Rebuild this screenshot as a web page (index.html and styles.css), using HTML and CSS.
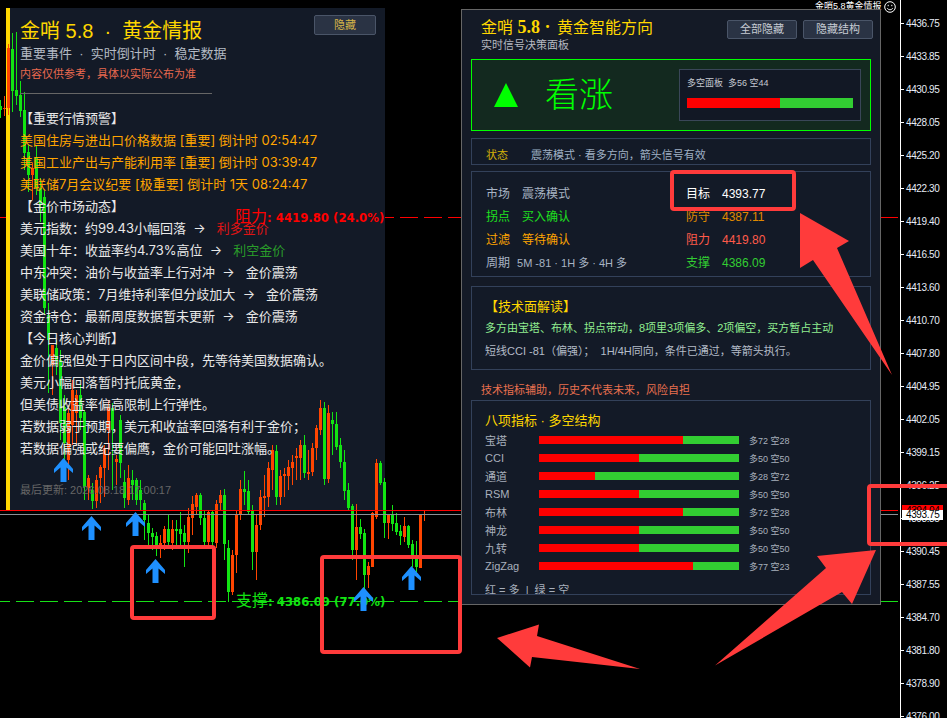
FILE: index.html
```html
<!DOCTYPE html>
<html lang="zh-CN">
<head>
    <meta charset="UTF-8">
    <meta name="viewport" content="width=device-width, initial-scale=1.0">
    <title>金哨 5.8 黄金情报</title>
    <link rel="stylesheet" href="styles.css">
</head>
<body>
    <div class="stage">
        <!-- Levels sit behind the info panel -->
        <svg class="layer" width="947" height="718">
            <line class="dash dash-red" x1="898" y1="217.5" x2="0" y2="217.5"></line>
            <line class="dash dash-green" x1="898" y1="601.5" x2="0" y2="601.5"></line>
        </svg>

        <div class="info-bg"></div>

        <svg class="layer" width="947" height="718" shape-rendering="crispEdges">
            <g id="candles"></g>
            <line class="price-line red" x1="0" y1="510.5" x2="898" y2="510.5"></line>
            <line class="price-line gray" x1="0" y1="514.5" x2="898" y2="514.5"></line>
        </svg>

        <!-- Left panel: events -->
        <div class="info-panel">
            <div class="info-head">
                <div class="info-title">金哨 5.8  ·  黄金情报</div>
                <button class="btn btn-gold">隐藏</button>
            </div>
            <div class="info-sub">重要事件  ·  实时倒计时  ·  稳定数据</div>
            <div class="info-warn">内容仅供参考，具体以实际公布为准</div>
            <div class="info-rule"></div>
            <div class="info-lines">
                <div>【重要行情预警】</div>
                <div class="orange">美国住房与进出口价格数据 [重要] 倒计时 02:54:47</div>
                <div class="orange">美国工业产出与产能利用率 [重要] 倒计时 03:39:47</div>
                <div class="orange">美联储7月会议纪要 [极重要] 倒计时 1天 08:24:47</div>
                <div>【金价市场动态】</div>
                <div>美元指数：约99.43小幅回落  →   <span class="bull">利多金价</span></div>
                <div>美国十年：收益率约4.73%高位  →   <span class="bear">利空金价</span></div>
                <div>中东冲突：油价与收益率上行对冲  →   金价震荡</div>
                <div>美联储政策：7月维持利率但分歧加大  →   金价震荡</div>
                <div>资金持仓：最新周度数据暂未更新  →   金价震荡</div>
                <div>【今日核心判断】</div>
                <div>金价偏强但处于日内区间中段，先等待美国数据确认。</div>
                <div>美元小幅回落暂时托底黄金，</div>
                <div>但美债收益率偏高限制上行弹性。</div>
                <div>若数据弱于预期，美元和收益率回落有利于金价；</div>
                <div>若数据偏强或纪要偏鹰，金价可能回吐涨幅。</div>
            </div>
            <div class="info-foot">最后更新: 2026.08.18 17:00:17</div>
        </div>

        <div class="level-label label-red">阻力<b>: 4419.80 (24.0%)</b></div>
        <div class="level-label label-green">支撑<b>: 4386.09 (77.0%)</b></div>

        <div class="ea-name">金哨5.8黄金情报</div>
        <svg class="smiley" width="12" height="12" viewBox="0 0 12 12">
            <circle cx="6" cy="6" r="5.3"></circle>
            <path d="M3.2 7.2c1.2 2 4.4 2 5.6 0"></path>
            <path d="M4.2 3.8v1.4M7.8 3.8v1.4"></path>
        </svg>

        <!-- Price axis -->
        <div class="axis">
            <div class="tick">4436.75</div>
            <div class="tick">4433.85</div>
            <div class="tick">4430.95</div>
            <div class="tick">4428.05</div>
            <div class="tick">4425.20</div>
            <div class="tick">4422.30</div>
            <div class="tick">4419.40</div>
            <div class="tick">4416.50</div>
            <div class="tick">4413.60</div>
            <div class="tick">4410.70</div>
            <div class="tick">4407.80</div>
            <div class="tick">4404.95</div>
            <div class="tick">4402.05</div>
            <div class="tick">4399.15</div>
            <div class="tick">4396.25</div>
            <div class="tick">4393.35</div>
            <div class="tick">4390.45</div>
            <div class="tick">4387.55</div>
            <div class="tick">4384.70</div>
            <div class="tick">4381.80</div>
            <div class="tick">4378.90</div>
            <div class="tick">4376.00</div>
        </div>
        <div class="tag tag-ask">4394.04</div>
        <div class="tag tag-bid">4393.75</div>

        <!-- Right panel: signal -->
        <div class="signal-panel">
            <div class="signal-head">
                <div>
                    <div class="signal-title">金哨 <b>5.8 ·</b> 黄金智能方向</div>
                    <div class="signal-sub">实时信号决策面板</div>
                </div>
                <div class="btn-group">
                    <button class="btn">全部隐藏</button>
                    <button class="btn">隐藏结构</button>
                </div>
            </div>

            <div class="trend-card">
                <div class="trend-arrow"></div>
                <div class="trend-text">看涨</div>
                <div class="trend-box">
                    <div class="trend-box-text">多空面板  多56 空44</div>
                    <div class="bar trend-bar"><div class="bar-fill" style="width: 56%"></div></div>
                </div>
            </div>

            <div class="card status-card">
                <span class="status-key">状态</span>
                <span>震荡模式 · 看多方向，箭头信号有效</span>
            </div>

            <div class="card levels-card">
                <div class="kv"><span>市场</span><span>震荡模式</span></div>
                <div class="kv white"><span>目标</span><span>4393.77</span></div>
                <div class="kv lime"><span>拐点</span><span>买入确认</span></div>
                <div class="kv amber"><span>防守</span><span>4387.11</span></div>
                <div class="kv orange"><span>过滤</span><span>等待确认</span></div>
                <div class="kv coral"><span>阻力</span><span>4419.80</span></div>
                <div class="kv kv-tight"><span>周期</span><span>5M -81 · 1H 多 · 4H 多</span></div>
                <div class="kv green"><span>支撑</span><span>4386.09</span></div>
            </div>

            <div class="card tech-card">
                <div class="tech-title">【技术面解读】</div>
                <div class="tech-line light-green">多方由宝塔、布林、拐点带动，8项里3项偏多、2项偏空，买方暂占主动</div>
                <div class="tech-line">短线CCI -81（偏强）；&nbsp; 1H/4H同向，条件已通过，等箭头执行。</div>
            </div>

            <div class="risk">技术指标辅助，历史不代表未来，风险自担</div>

            <div class="card meter-card">
                <div class="meter-title">八项指标 · 多空结构</div>
                <div class="meter"><span class="meter-name">宝塔</span><div class="bar"><div class="bar-fill" style="width: 72%"></div></div><span class="meter-val">多72 空28</span></div>
                <div class="meter"><span class="meter-name">CCI</span><div class="bar"><div class="bar-fill" style="width: 50%"></div></div><span class="meter-val">多50 空50</span></div>
                <div class="meter"><span class="meter-name">通道</span><div class="bar"><div class="bar-fill" style="width: 28%"></div></div><span class="meter-val">多28 空72</span></div>
                <div class="meter"><span class="meter-name">RSM</span><div class="bar"><div class="bar-fill" style="width: 50%"></div></div><span class="meter-val">多50 空50</span></div>
                <div class="meter"><span class="meter-name">布林</span><div class="bar"><div class="bar-fill" style="width: 72%"></div></div><span class="meter-val">多72 空28</span></div>
                <div class="meter"><span class="meter-name">神龙</span><div class="bar"><div class="bar-fill" style="width: 50%"></div></div><span class="meter-val">多50 空50</span></div>
                <div class="meter"><span class="meter-name">九转</span><div class="bar"><div class="bar-fill" style="width: 50%"></div></div><span class="meter-val">多50 空50</span></div>
                <div class="meter"><span class="meter-name">ZigZag</span><div class="bar"><div class="bar-fill" style="width: 77%"></div></div><span class="meter-val">多77 空23</span></div>
                <div class="meter-legend">红 = 多  |  绿 = 空</div>
            </div>
        </div>

        <!-- Buy arrows and hand-drawn red notes on top -->
        <svg class="layer" width="947" height="718">
            <defs>
                <path id="buy" d="M9.5 0L19 11v4l-6.5-5.5V24h-6V9.5L0 15v-4z"></path>
            </defs>
            <g class="buy-arrows">
                <use href="#buy" x="54" y="458"></use>
                <use href="#buy" x="82" y="516"></use>
                <use href="#buy" x="126" y="512"></use>
                <use href="#buy" x="146" y="559"></use>
                <use href="#buy" x="354" y="587"></use>
                <use href="#buy" x="402" y="566"></use>
            </g>
            <g class="note-boxes">
                <rect x="132" y="547" width="82" height="71" rx="2"></rect>
                <rect x="322" y="557" width="138" height="95" rx="2"></rect>
                <rect x="672" y="172" width="122" height="37" rx="2"></rect>
                <rect x="869" y="486" width="90" height="58" rx="2"></rect>
            </g>
            <g class="note-arrows">
                <polygon points="800,213 849,241 837,248 892,375 813,260 800,268"></polygon>
                <polygon points="876,550 852,604 842,592 715,665.5 826,568 817,556"></polygon>
                <polygon points="497,638 539,624.5 537,636 640,669 532,657 530,667.5"></polygon>
            </g>
        </svg>
    </div>

    <script src="chart.js"></script>
</body>
</html>
```

FILE: styles.css
```css
* {
    box-sizing: border-box;
}

html, body {
    margin: 0;
    padding: 0;
    background-color: #000;
}

body {
    font-family: "Liberation Sans", "Noto Sans CJK SC", sans-serif;
    color: #e8e8e8;
    overflow: hidden;
}

.stage {
    position: relative;
    width: 947px;
    height: 718px;
    overflow: hidden;
    background-color: #000;
}

.layer {
    position: absolute;
    left: 0;
    top: 0;
}

.dash {
    stroke-width: 1;
    stroke-dasharray: 18 6;
}

.dash-red { stroke: #ff0000; }
.dash-green { stroke: #17e017; }

.price-line { stroke-width: 1; }
.price-line.red { stroke: #ff0000; }
.price-line.gray { stroke: #8b8f96; }

.candle-up { fill: #12e412; }
.candle-down { fill: #ff4500; }

.buy-arrows { fill: #1e90ff; }
.note-boxes { fill: none; stroke: #ff3b3b; stroke-width: 4; }
.note-arrows { fill: #ff3b3b; }

/* Left panel */
.info-bg {
    position: absolute;
    left: 6px;
    top: 8px;
    width: 379px;
    height: 502px;
    background-color: #131a27;
    border-left: 4px solid #ffd700;
}

.info-panel {
    position: absolute;
    left: 10px;
    top: 8px;
    width: 375px;
    height: 502px;
    padding: 7px 9px 0 10px;
}

.info-head {
    display: flex;
    justify-content: space-between;
    align-items: flex-start;
}

.info-title {
    margin-top: 2px;
    font-size: 20px;
    line-height: 28px;
    color: #ffd700;
    white-space: pre;
}

.info-sub {
    font-size: 13px;
    line-height: 18px;
    color: #b4bac4;
    white-space: pre;
}

.info-warn {
    margin-top: 3px;
    font-size: 11px;
    line-height: 16px;
    color: #e8694f;
}

.info-rule {
    width: 192px;
    height: 1px;
    margin-top: 11px;
    background-color: #666;
}

.info-lines {
    margin-top: 13px;
    font-family: Inter, "Noto Sans CJK SC", sans-serif;
    font-size: 13px;
    line-height: 22px;
}

.info-lines div {
    height: 22px;
    white-space: pre;
}

.info-foot {
    margin-top: 23px;
    font-size: 11px;
    line-height: 16px;
    color: #666;
}

.orange { color: #ffa500; }
.bull { color: #e01414; }
.bear { color: #2a9d2a; }

.btn {
    width: 70px;
    height: 19px;
    padding: 0;
    font-family: inherit;
    font-size: 11px;
    line-height: 17px;
    color: #c6cbd3;
    background-color: #2a3344;
    border: 1px solid #4a5568;
    border-radius: 2px;
}

.btn-gold {
    width: 62px;
    height: 20px;
    color: #d8b648;
}

/* Chart labels */
.level-label {
    position: absolute;
    font-size: 16px;
    line-height: 20px;
    white-space: pre;
}

.level-label b {
    font-family: "DejaVu Sans", sans-serif;
    font-size: 11.7px;
}

.label-red {
    left: 235px;
    top: 207px;
    color: #ff0000;
}

.label-green {
    left: 236px;
    top: 591px;
    color: #12e412;
}

.ea-name {
    position: absolute;
    left: 815px;
    top: 0;
    font-size: 9px;
    line-height: 12px;
    color: #fff;
}

.smiley {
    position: absolute;
    left: 884px;
    top: 1px;
    fill: none;
    stroke: #fff;
    stroke-width: 1;
}

/* Price axis */
.axis {
    position: absolute;
    left: 900px;
    top: 0;
    width: 47px;
    height: 718px;
    padding-top: 6.5px;
    border-left: 1px solid #fff;
}

.tick {
    display: flex;
    align-items: center;
    height: 33px;
    padding-left: 5px;
    font-size: 10px;
    letter-spacing: -0.4px;
    color: #e6ecf5;
}

.tick::before {
    content: "";
    position: absolute;
    left: 0;
    width: 3px;
    height: 1px;
    background-color: #fff;
}

.tag {
    position: absolute;
    left: 902px;
    width: 41px;
    padding-left: 4px;
    font-size: 10px;
    letter-spacing: -0.4px;
    color: #000;
}

.tag-ask {
    top: 505px;
    height: 11px;
    line-height: 11px;
    background-color: #ff0000;
}

.tag-bid {
    top: 510px;
    height: 10px;
    line-height: 10px;
    background-color: #fff;
}

/* Right panel */
.signal-panel {
    position: absolute;
    left: 461px;
    top: 9px;
    width: 420px;
    height: 596px;
    padding: 6px 7px 0 9px;
    overflow: hidden;
    background-color: #141a26;
    border: 1px solid #666;
}

.signal-head {
    display: flex;
    justify-content: space-between;
    padding-left: 10px;
}

.signal-title {
    height: 22px;
    font-size: 16px;
    line-height: 22px;
    color: #ffd700;
}

.signal-title b {
    font-family: "Liberation Serif", serif;
    font-size: 18px;
    margin-right: 2px;
}

.signal-sub {
    font-size: 11px;
    line-height: 14px;
    color: #b4b8c0;
}

.btn-group {
    display: flex;
    gap: 6px;
    margin-top: 4px;
}

.trend-card {
    display: flex;
    align-items: center;
    width: 400px;
    height: 72px;
    margin-top: 7px;
    padding: 0 9px 0 22px;
    background-color: #13291f;
    border: 1px solid #00ff00;
}

.trend-arrow {
    width: 0;
    height: 0;
    border-left: 12px solid transparent;
    border-right: 12px solid transparent;
    border-bottom: 24px solid #00ff00;
}

.trend-text {
    margin-left: 27px;
    font-size: 34px;
    font-weight: 300;
    line-height: 40px;
    color: #00ff00;
}

.trend-box {
    width: 182px;
    height: 52px;
    margin-left: auto;
    padding: 6px 7px 0;
    background-color: #121825;
    border: 1px solid #3a4658;
}

.trend-box-text {
    font-size: 9px;
    line-height: 14px;
    color: #c4c8d0;
    white-space: pre;
}

.bar {
    width: 200px;
    height: 8px;
    background-color: #32cd32;
}

.bar-fill {
    height: 100%;
    background-color: #ff0000;
}

.trend-bar {
    width: 166px;
    height: 10px;
    margin-top: 8px;
}

.card {
    width: 400px;
    background-color: #131a27;
    border: 1px solid #33415a;
}

.status-card {
    display: flex;
    height: 27px;
    margin-top: 7px;
    padding: 8px 0 0 14px;
    font-size: 11px;
    line-height: 16px;
    color: #9fb0c4;
}

.status-key {
    width: 45px;
    color: #d4b106;
}

.levels-card {
    display: grid;
    grid-template-columns: 200px 1fr;
    grid-auto-rows: 23px;
    height: 106px;
    margin-top: 6px;
    padding: 11px 0 0 14px;
    font-size: 12px;
    line-height: 23px;
    color: #a8b4c4;
}

.kv {
    display: flex;
    gap: 12px;
}

.kv-tight { gap: 7px; font-size: 11px; }
.kv-tight span:first-child { font-size: 12px; }
.kv.white { color: #fff; }
.kv.lime { color: #1fe01f; }
.kv.amber { color: #e08a00; }
.kv.orange { color: #ffa500; }
.kv.coral { color: #ff5a4a; }
.kv.green { color: #32cd32; }

.tech-card {
    height: 84px;
    margin-top: 9px;
    padding: 10px 0 0 13px;
}

.tech-title {
    font-size: 13px;
    line-height: 20px;
    color: #ffd700;
}

.tech-line {
    font-size: 11px;
    line-height: 23px;
    color: #b4bcc8;
}

.tech-line.light-green { color: #90ee90; }

.risk {
    margin-top: 12px;
    padding-left: 10px;
    font-size: 11px;
    line-height: 16px;
    color: #e8704f;
}

.meter-card {
    height: 195px;
    margin-top: 2px;
    padding: 10px 0 0 13px;
    overflow: hidden;
}

.meter-title {
    font-size: 13px;
    line-height: 20px;
    color: #ffd700;
}

.meter {
    display: flex;
    align-items: center;
    height: 18px;
    font-size: 11px;
    color: #a8b0bc;
}

.meter-name {
    width: 54px;
}

.meter-val {
    margin-left: 10px;
    font-size: 9px;
}

.meter-legend {
    margin-top: 7px;
    font-size: 11px;
    line-height: 16px;
    color: #a8b0bc;
    white-space: pre;
}
```

FILE: chart.js
```js
// Candles read off the chart, one every 4px from x = 0.5
// [up?, wick top, body top, body bottom, wick bottom]
const candles = [
    [1, 100, 106, 110, 118], [0, 96, 108, 109, 116], [0, 44, 48, 108, 115], [1, 33, 49, 91, 112],
    [1, 32, 90, 96, 105], [1, 81, 95, 111, 117], [1, 92, 110, 153, 170], [1, 145, 152, 175, 192],
    [0, 163, 168, 175, 200], [1, 145, 157, 187, 195], [1, 178, 188, 205, 222], [1, 190, 197, 308, 315],
    [1, 303, 315, 340, 393], [0, 345, 345, 365, 395], [1, 340, 348, 360, 375], [1, 350, 360, 423, 440],
    [1, 395, 407, 443, 480], [0, 405, 413, 460, 480], [0, 380, 390, 425, 445], [0, 390, 395, 413, 445],
    [1, 385, 395, 418, 430], [1, 410, 412, 487, 500], [0, 475, 478, 488, 500], [1, 483, 490, 501, 509],
    [0, 475, 480, 501, 508], [0, 465, 467, 478, 503], [0, 445, 448, 468, 497], [0, 400, 407, 430, 470],
    [1, 403, 408, 430, 490], [0, 455, 459, 462, 485], [1, 415, 420, 463, 478], [1, 470, 482, 498, 508],
    [0, 465, 478, 500, 505], [1, 470, 480, 485, 500], [1, 478, 480, 500, 505], [1, 480, 490, 500, 510],
    [1, 500, 503, 520, 540], [1, 515, 523, 533, 545], [1, 528, 533, 537, 550], [1, 532, 536, 545, 556],
    [0, 535, 543, 545, 558], [0, 526, 529, 543, 550], [1, 515, 529, 542, 549], [0, 520, 529, 543, 550],
    [1, 520, 529, 531, 545], [1, 512, 529, 534, 545], [1, 525, 533, 542, 567], [0, 508, 517, 542, 553],
    [0, 496, 504, 518, 535], [0, 493, 495, 507, 515], [1, 493, 495, 518, 525], [1, 510, 518, 542, 545],
    [0, 510, 512, 542, 545], [1, 510, 512, 542, 548], [0, 500, 504, 543, 548], [0, 490, 495, 503, 510],
    [1, 489, 495, 544, 560], [1, 540, 548, 592, 602], [0, 550, 555, 592, 595], [0, 510, 515, 555, 573],
    [0, 480, 489, 514, 520], [1, 471, 489, 492, 505], [1, 480, 491, 512, 515], [1, 505, 511, 552, 570],
    [0, 515, 525, 552, 580], [0, 490, 497, 525, 530], [0, 475, 496, 498, 517], [0, 462, 468, 497, 507],
    [0, 445, 450, 470, 490], [1, 445, 451, 497, 505], [0, 470, 476, 497, 505], [0, 468, 474, 476, 497],
    [0, 460, 467, 476, 490], [0, 455, 462, 468, 485], [0, 448, 456, 458, 480], [0, 440, 445, 458, 480],
    [1, 435, 445, 473, 478], [0, 450, 472, 474, 480], [0, 443, 448, 472, 476], [0, 425, 428, 448, 460],
    [0, 400, 408, 430, 435], [1, 402, 408, 479, 485], [0, 405, 413, 479, 483], [1, 412, 420, 424, 455],
    [1, 412, 424, 447, 450], [1, 438, 445, 462, 468], [1, 450, 462, 491, 500], [1, 483, 490, 508, 510],
    [1, 504, 506, 550, 560], [0, 504, 527, 550, 580], [1, 519, 527, 534, 539], [1, 529, 533, 575, 596],
    [0, 562, 566, 575, 588], [0, 512, 513, 567, 567], [0, 459, 463, 517, 519], [1, 461, 463, 483, 485],
    [1, 478, 482, 523, 538], [0, 515, 515, 523, 539], [1, 505, 515, 524, 531], [1, 513, 523, 532, 535],
    [1, 525, 531, 536, 545], [0, 517, 526, 537, 542], [1, 525, 526, 545, 548], [1, 540, 544, 557, 567],
    [1, 541, 558, 567, 572], [0, 515, 515, 568, 568], [0, 511, 514, 515, 521]
];

const group = document.getElementById('candles');

function addRect(x, y, width, height, className) {
    const rect = document.createElementNS('http://www.w3.org/2000/svg', 'rect');
    rect.setAttribute('x', x);
    rect.setAttribute('y', y);
    rect.setAttribute('width', width);
    rect.setAttribute('height', height);
    rect.setAttribute('class', className);
    group.appendChild(rect);
}

candles.forEach((c, i) => {
    const x = i * 4;
    const className = c[0] ? 'candle-up' : 'candle-down';
    addRect(x, c[1], 1, c[4] - c[1], className);
    addRect(x - 1, c[2], 3, c[3] - c[2], className);
});
```
